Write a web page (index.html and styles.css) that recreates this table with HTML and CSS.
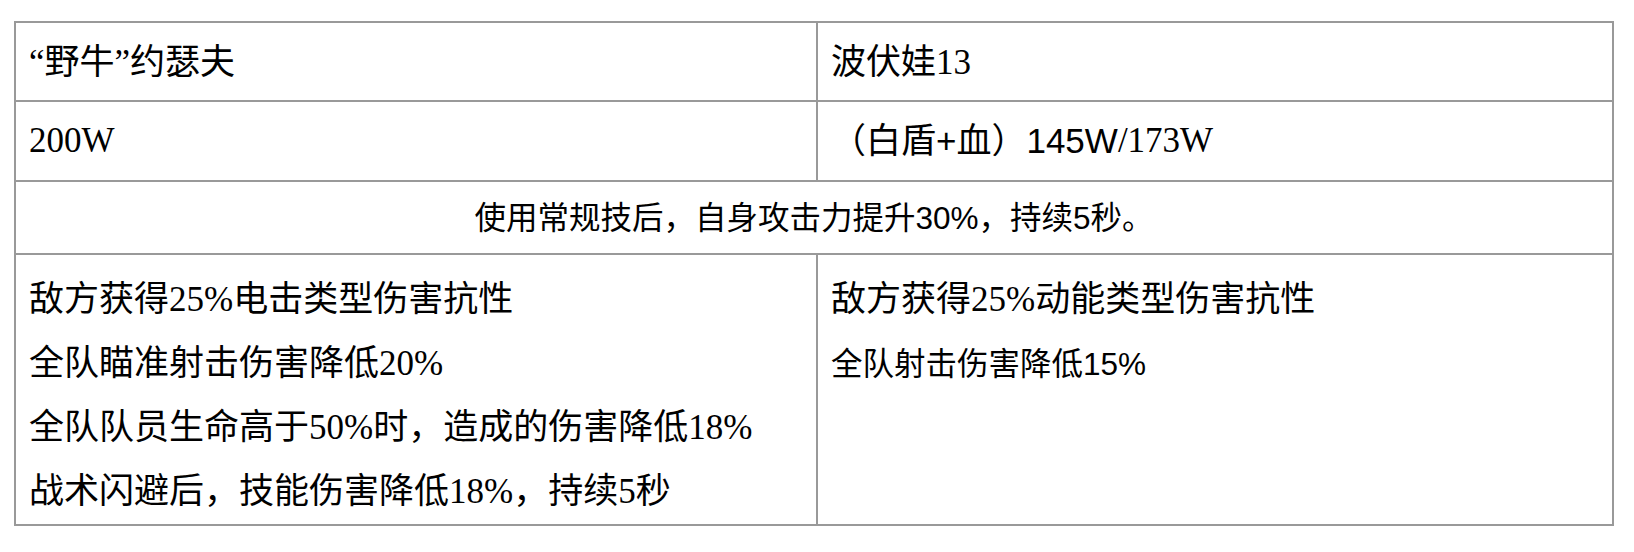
FILE: index.html
```html
<!DOCTYPE html>
<html lang="zh-CN">
<head>
<meta charset="utf-8">
<title>角色对比</title>
<link rel="stylesheet" href="styles.css">
</head>
<body>
<div class="sheet">
  <div class="cell head serif">“野牛”约瑟夫</div>
  <div class="cell head serif">波伏娃13</div>
  <div class="cell serif">200W</div>
  <div class="cell"><span class="sans">（白盾+血）145W</span><span class="serif">/173W</span></div>
  <div class="cell wide sans">使用常规技后，自身攻击力提升30%，持续5秒。</div>
  <div class="cell list serif">
    <p class="line">敌方获得25%电击类型伤害抗性</p>
    <p class="line">全队瞄准射击伤害降低20%</p>
    <p class="line">全队队员生命高于50%时，造成的伤害降低18%</p>
    <p class="line">战术闪避后，技能伤害降低18%，持续5秒</p>
  </div>
  <div class="cell list">
    <p class="line serif">敌方获得25%动能类型伤害抗性</p>
    <p class="line sans small">全队射击伤害降低15%</p>
  </div>
</div>
</body>
</html>
```
FILE: styles.css
```css
body {
  margin: 0;
  background: #ffffff;
  color: #000000;
  font-family: "Noto Sans CJK SC", sans-serif;
}

.sheet {
  display: grid;
  grid-template-columns: 802px 796px;
  grid-template-rows: 79px 80px 73px 271px;
  width: max-content;
  margin: 21px 0 0 14px;
  border-top: 2px solid #999999;
  border-left: 2px solid #999999;
}

.cell {
  box-sizing: border-box;
  display: flex;
  align-items: center;
  padding: 0 13px;
  border-right: 2px solid #999999;
  border-bottom: 2px solid #999999;
  font-size: 35px;
  line-height: 64px;
  white-space: nowrap;
}

.head {
  padding-top: 3px;
}

.serif {
  font-family: "Liberation Serif", "Noto Sans CJK SC", serif;
}

.sans {
  font-family: "Liberation Sans", "Noto Sans CJK SC", sans-serif;
}

.wide {
  grid-column: 1 / span 2;
  justify-content: center;
  font-size: 31.5px;
}

.list {
  flex-direction: column;
  align-items: flex-start;
  justify-content: flex-start;
  padding-top: 13px;
}

.line {
  margin: 0;
}

.small {
  font-size: 31.5px;
}
```
